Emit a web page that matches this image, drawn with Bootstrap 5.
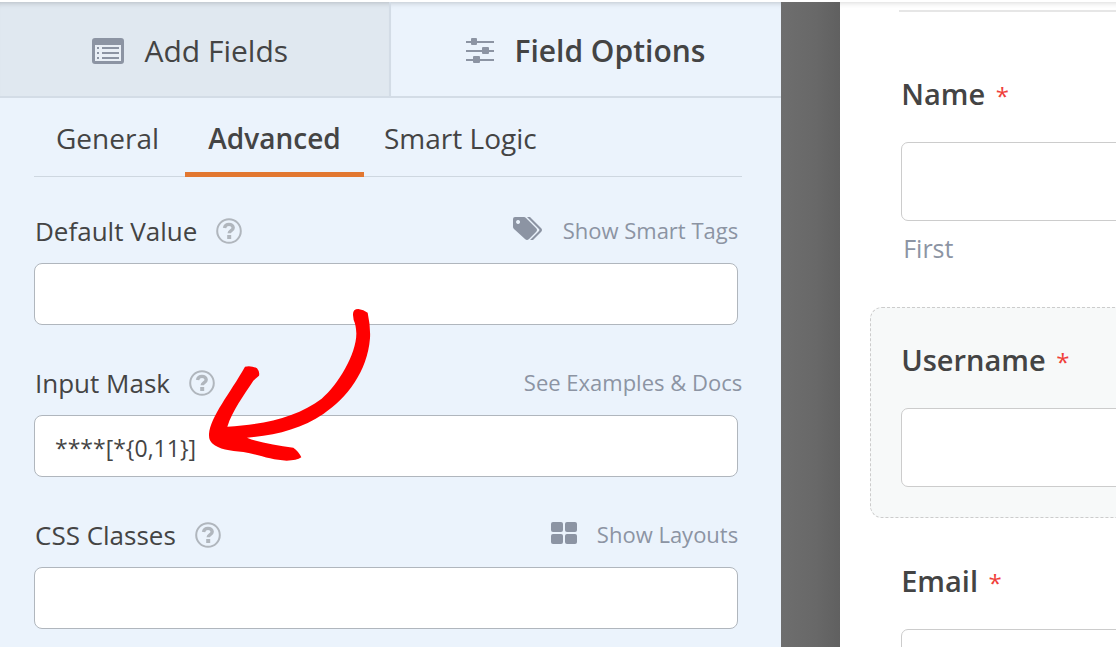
<!DOCTYPE html>
<html lang="en">
<head>
<meta charset="utf-8">
<meta name="viewport" content="width=device-width, initial-scale=1">
<title>Form Builder</title>
<link rel="stylesheet" href="https://cdn.jsdelivr.net/npm/bootstrap@5.3.0/dist/css/bootstrap.min.css">
<style>
body { font-family: "Open Sans", "Noto Sans", sans-serif; color: #444; background: #fff; }
button { font-family: inherit; color: inherit; }
.builder { border-top: 2px solid #fff; }
.sidebar { flex: 0 0 70%; background: #ebf3fc; }
.main-tab { height: 96px; font-size: 30px; gap: 20px; border: 0; border-bottom: 2px solid #d3dce6; background: #ebf3fc; box-shadow: inset 0 6px 6px -6px rgba(0,0,0,.25); padding: 3px 0 0; }
.main-tab.inactive { background: #e0e8f0; border-right: 2px solid #d3dce6; padding-right: 8px; }
.options { padding: 0 39px 0 34px; }
.sub-tabs { border-bottom: 1px solid #ced7e0; height: 79px; margin-bottom: 34px; }
.sub-tab { border: 0; border-bottom: 5px solid transparent; background: none; font-size: 28px; line-height: 36px; padding: 5px 20px 0; height: 79px; display: flex; align-items: center; }
.sub-tab.first { padding-left: 22px; width: 151px; }
.sub-tab.current { border-bottom-color: #e27730; justify-content: center; width: 179px; }
.option { margin-bottom: 38px; }
.option-head { height: 40px; margin-bottom: 12px; padding-left: 1px; }
.option-head label { font-size: 26px; line-height: 40px; }
.help { width: 26px; height: 26px; margin-left: 19px; }
.side-link { font-size: 22px; line-height: 36px; color: #8c94a3; text-decoration: none; white-space: nowrap; padding-bottom: 2px; }
.side-link svg { margin-bottom: 3px; }
.inset { margin-right: 4px; }
.option-input { width: calc(100% - 4px); height: 62px; border: 1px solid #b0b6bd; border-radius: 8px; padding: 4px 20px 0; font-size: 23px; color: #444; background: #fff; display: block; }
.arrow { left: 174px; top: -55px; z-index: 2; pointer-events: none; }
.gutter { flex: 0 0 59px; background: linear-gradient(90deg, #6e6e6e, #686868 60%, #606060); }
.preview { min-width: 460px; flex: 1 0 460px; padding: 0 30px; box-shadow: inset 0 6px 6px -6px rgba(0,0,0,.2); }
.rule { height: 10px; border-bottom: 2px solid #e6e6e6; margin: 0 0 29px 29px; }
.preview-field { border: 1px solid transparent; border-radius: 12px; padding: 30px; margin-bottom: 10px; }
.preview-field.selected { border: 1px dashed #ccc; background: #f7f9f9; }
.preview-field label { font-size: 29px; line-height: 44px; font-weight: 600; display: block; }
.required { color: #f0403a; font-weight: 400; font-size: 24px; margin-left: 3px; }
.preview-input { display: block; width: 100%; height: 79px; margin-top: 24px; border: 1px solid #ccc; border-radius: 7px; background: #fff; }
.sublabel { font-size: 25px; line-height: 36px; color: #8c94a3; margin: 9px 0 0 2px; }
</style>
</head>
<body>
<div class="builder d-flex vh-100 overflow-hidden">
  <aside class="sidebar">
    <div class="d-flex">
      <button type="button" class="main-tab inactive w-50 d-flex align-items-center justify-content-center">
        <svg width="32" height="26" viewBox="0 0 32 26" aria-hidden="true"><rect width="32" height="26" rx="3" fill="#8c94a3"/><path d="M3 7h26v16H3z" fill="#e9eff6"/><path d="M5 9h2v2H5zm5 0h17v2H10zM5 14h2v2H5zm5 0h17v2H10zM5 19h2v2H5zm5 0h17v2H10z" fill="#8c94a3"/></svg>
        <span>Add Fields</span>
      </button>
      <button type="button" class="main-tab w-50 d-flex align-items-center justify-content-center fw-semibold">
        <svg width="28" height="26" viewBox="0 0 28 26" fill="#8c94a3" aria-hidden="true"><path d="M0 3h28v2H0zM0 12h28v2H0zM0 21h28v2H0z"/><rect x="5" width="6" height="7" rx="1"/><rect x="16" y="9" width="7" height="7" rx="1"/><rect x="7" y="18" width="7" height="7" rx="1"/></svg>
        <span>Field Options</span>
      </button>
    </div>
    <div class="options">
      <div class="sub-tabs d-flex">
        <button type="button" class="sub-tab first">General</button>
        <button type="button" class="sub-tab current fw-semibold">Advanced</button>
        <button type="button" class="sub-tab text-nowrap">Smart Logic</button>
      </div>
      <div class="option">
        <div class="option-head d-flex align-items-center">
          <label for="default-value">Default Value</label>
          <svg class="help" viewBox="0 0 26 26" fill="none" stroke="#b0b6bd" aria-hidden="true"><circle cx="13" cy="13" r="11.8" stroke-width="2"/><path d="M8.500 10c.5-2.500 2-3.600 4.500-3.600 2.400 0 4.200 1.300 4.200 3.300 0 3-4 2.800-4 5.600" stroke-width="3.400"/><path d="M13.200 17v4" stroke-width="4"/></svg>
          <a href="#" class="side-link inset ms-auto d-flex align-items-center"><svg class="me-3" width="34" height="24" viewBox="0 0 34 24" fill="#8c94a3" aria-hidden="true"><path fill-rule="evenodd" d="M2 0h9q1 0 2 1l10 10q2 2 0 4l-7 7q-2 2-4 0L1 12q-1-1-1-2V2q0-2 2-2zm3 3a2 2 0 1 0 .1 0z"/><path d="M14 0h3l11 11q2 2 0 4l-8 8h-3l9-9q1-1 0-2z"/></svg><span>Show Smart Tags</span></a>
        </div>
        <input type="text" class="option-input" id="default-value">
      </div>
      <div class="option position-relative">
        <div class="option-head d-flex align-items-center">
          <label for="input-mask">Input Mask</label>
          <svg class="help" viewBox="0 0 26 26" fill="none" stroke="#b0b6bd" aria-hidden="true"><circle cx="13" cy="13" r="11.8" stroke-width="2"/><path d="M8.500 10c.5-2.500 2-3.600 4.500-3.600 2.400 0 4.200 1.300 4.200 3.300 0 3-4 2.800-4 5.600" stroke-width="3.400"/><path d="M13.200 17v4" stroke-width="4"/></svg>
          <a href="#" class="side-link ms-auto">See Examples &amp; Docs</a>
        </div>
        <input type="text" class="option-input" id="input-mask" value="****[*{0,11}]">
        <svg class="arrow position-absolute" width="164" height="154" viewBox="84 54 492 462" fill="#f00" aria-hidden="true"><path d="M519 75Q518 57 535 57Q551 59 563 68Q572 110 570 145C562 245 500 325 430 372C365 416 285 437 201 443C240 459 290 465 340 473Q356 484 364 502Q350 512 320 512C275 511 235 494 190 486C150 482 115 477 98 461Q86 452 87 432C91 380 150 310 195 230Q214 226 231 235Q240 246 237 257L220 272C190 318 158 360 142 410C250 405 355 380 425 326C475 285 530 190 529 130Q528 105 521 90Z"/></svg>
      </div>
      <div class="option">
        <div class="option-head d-flex align-items-center">
          <label for="css-classes">CSS Classes</label>
          <svg class="help" viewBox="0 0 26 26" fill="none" stroke="#b0b6bd" aria-hidden="true"><circle cx="13" cy="13" r="11.8" stroke-width="2"/><path d="M8.500 10c.5-2.500 2-3.600 4.500-3.600 2.400 0 4.200 1.300 4.200 3.300 0 3-4 2.800-4 5.600" stroke-width="3.400"/><path d="M13.200 17v4" stroke-width="4"/></svg>
          <a href="#" class="side-link inset ms-auto d-flex align-items-center"><svg class="me-3" width="30" height="22" viewBox="0 0 30 22" fill="#8c94a3" aria-hidden="true"><rect width="12" height="10" rx="2"/><rect x="14" width="12" height="10" rx="2"/><rect y="12" width="12" height="10" rx="2"/><rect x="14" y="12" width="12" height="10" rx="2"/></svg><span>Show Layouts</span></a>
        </div>
        <input type="text" class="option-input" id="css-classes">
      </div>
    </div>
  </aside>
  <div class="gutter"></div>
  <main class="preview">
    <div class="rule"></div>
    <div class="preview-field">
      <label for="first-name">Name <span class="required">*</span></label>
      <input type="text" class="preview-input" id="first-name">
      <div class="sublabel">First</div>
    </div>
    <div class="preview-field selected">
      <label for="username">Username <span class="required">*</span></label>
      <input type="text" class="preview-input" id="username">
    </div>
    <div class="preview-field">
      <label for="email">Email <span class="required">*</span></label>
      <input type="email" class="preview-input" id="email">
    </div>
  </main>
</div>
<script src="https://cdn.jsdelivr.net/npm/bootstrap@5.3.0/dist/js/bootstrap.bundle.min.js"></script>
</body>
</html>
